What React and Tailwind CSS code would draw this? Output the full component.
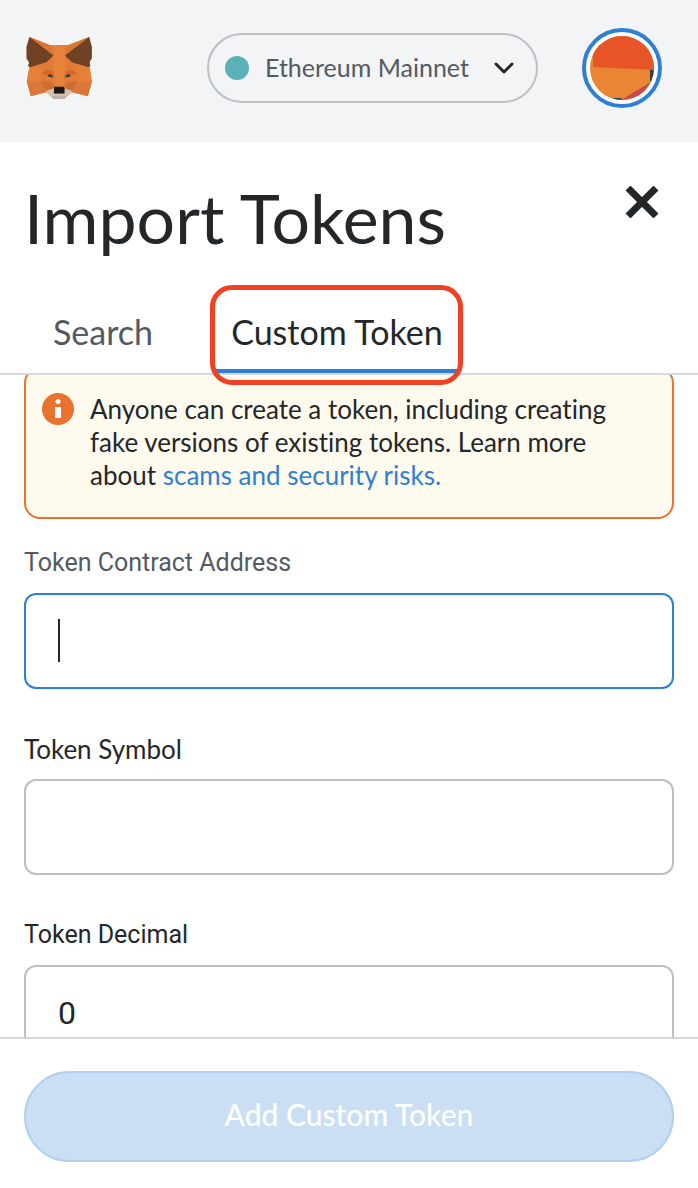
import React from 'react';

function FoxLogo() {
  return (
    <svg viewBox="0 0 195 184" className="h-[62px] w-[66px]" aria-label="Wallet logo" role="img">
      <path fill="#e17b35" d="M10 0 70 24h56L187 0l8 32-7 52 7 48-12 44-48-12-22 20H82l-22-20-46 12L2 132l8-46L1 32z" />
      <path fill="#e68239" d="M82 24h32l4 62-7 62H87L78 86z" />
      <path fill="#da7630" d="M10 0 70 24l12 31zM187 0l-61 24-11 31z" />
      <path fill="#704225" d="M10 0 81 55 60 75 14 90 5 86 9 76 1 64 1 30zM187 0l-72 55 21 20 47 15 8-4-4-10 8-12V30z" />
      <path fill="#e67f37" d="M14 90 47 80 42 132H2l8-42zM183 90l-33-10 4 52h41l-7-42z" />
      <path fill="#d97838" d="M2 132h44l14 30-46 14zM195 132h-44l-16 30 48 14z" />
      <path fill="#cb6e31" d="M46 132h24l14 14-22 18zM151 132h-24l-14 14 22 18z" />
      <path fill="#d26b2b" d="M44 108 60 96l22 6 2 18zM151 108l-15-12-21 6-2 18z" />
      <path fill="#354453" d="m64 113 13 0 3 7-14-2zM132 113h-13l-3 7 14-2z" />
      <path fill="#3a2a22" d="m68 108 10 8-10-2zM127 108l-9 8 10-2z" />
      <path fill="#d8bfae" d="m58 160 26-8v15h29v-15l24 8-24 24H82z" />
      <path fill="#bdb3ac" d="M74 174h48l-9 10H82z" />
      <path fill="#17191b" d="m83 149 3-1h24l4 3v17H82z" />
    </svg>
  );
}

function AccountAvatar() {
  return (
    <svg viewBox="0 0 64 64" className="size-16 rounded-full" aria-hidden="true">
      <rect width="64" height="64" fill="#ea8534" />
      <path fill="#e75526" d="M3 0h61v34L3 31z" />
      <path fill="#c84b4a" d="M64 44 31 64h33z" />
      <path fill="#3a3c3d" d="M60 34h4v9l-4 3zM22 62l9 0 1 2H22z" />
    </svg>
  );
}

function Field({ id, label, labelClass, inputClass, focused, ...props }) {
  return (
    <div className="flex flex-col">
      <label htmlFor={id} className={`mb-3 leading-[36px] ${labelClass}`}>
        {label}
      </label>
      <div className="relative">
        <input
          id={id}
          type="text"
          className={`block h-24 w-full rounded-xl border-2 bg-white px-8 font-[Roboto,sans-serif] text-[32px] text-[#24272a] outline-none ${inputClass}`}
          {...props}
        />
        {/* text cursor */}
        {focused && <span className="absolute left-[34px] top-[26px] h-[43px] w-0.5 bg-[#24272a]" />}
      </div>
    </div>
  );
}

export default function App() {
  return (
    <div className="flex h-screen flex-col overflow-hidden bg-white font-[Lato,sans-serif] text-[#24272a] [font-variant-ligatures:none]">
      {/* network bar */}
      <header className="flex shrink-0 items-center bg-[#f2f4f6] pb-[34px] pl-[26px] pr-9 pt-7">
        <FoxLogo />
        <button
          type="button"
          className="ml-auto mr-11 flex h-[70px] w-[331px] items-center rounded-full border-2 border-[#bbc0c5] px-4 text-[#535a61]"
        >
          <span className="size-6 rounded-full bg-[#5cb0b7]" />
          <span className="ml-4 flex-1 text-left text-[25px]">Ethereum Mainnet</span>
          <svg viewBox="0 0 20 12" className="mr-1.5 h-3 w-5" fill="none" stroke="#24272a" strokeWidth="3" strokeLinecap="round" strokeLinejoin="round">
            <path d="m2 2 8 8 8-8" />
          </svg>
        </button>
        <button type="button" aria-label="Account menu" className="flex size-20 items-center justify-center rounded-full border-4 border-[#2f7fd3] bg-white">
          <AccountAvatar />
        </button>
      </header>

      {/* title */}
      <div className="flex shrink-0 items-start justify-between pb-7 pl-6 pr-[39px] pt-9">
        <h1 className="text-[68px] leading-[80px]">Import Tokens</h1>
        <button type="button" aria-label="Close" className="mt-2">
          <svg viewBox="0 0 34 32" className="h-8 w-[34px]" stroke="#24272a" strokeWidth="7">
            <path d="m3 2 28 28M31 2 3 30" />
          </svg>
        </button>
      </div>

      {/* tabs */}
      <div role="tablist" className="flex h-[89px] shrink-0 border-b-2 border-[#d6d9dc] pl-6 text-[34px]">
        <button type="button" role="tab" aria-selected="false" className="w-[190px] pr-8 pt-1 text-center text-[#535a61]">
          Search
        </button>
        <button type="button" role="tab" aria-selected="true" className="relative w-[246px] border-b-4 border-[#2f7fd3] pt-2">
          Custom Token
          <span className="absolute -bottom-4 -left-1 -right-[3px] -top-px z-10 rounded-[22px] border-[5px] border-[#f04124]" />
        </button>
      </div>

      {/* form */}
      <main className="flex min-h-0 flex-1 flex-col overflow-hidden px-6">
        <div className="-mt-2 flex shrink-0 gap-4 rounded-2xl border-2 border-[#e8722e] bg-[#fffaee] pb-[25px] pl-4 pr-10 pt-6">
          <svg viewBox="0 0 32 32" className="size-8 shrink-0" aria-hidden="true">
            <circle cx="16" cy="16" r="16" fill="#e8722e" />
            <circle cx="16" cy="8.500" r="2.500" fill="#fff" />
            <path fill="#fff" d="M13 14h6v11h-6z" />
          </svg>
          <p className="text-[26px] leading-[33px]">
            Anyone can create a token, including creating fake versions of existing tokens. Learn more about{' '}
            <a href="#risks" className="text-[#2f7fd3]">scams and security risks.</a>
          </p>
        </div>

        <form className="mt-[26px] flex flex-col gap-[42px]">
          <Field
            id="address"
            label="Token Contract Address"
            labelClass="font-[Roboto,sans-serif] text-[25px] text-[#535a61]"
            inputClass="border-[#2f7fd3]"
            focused
          />
          <Field id="symbol" label="Token Symbol" labelClass="text-[26px]" inputClass="border-[#bbc0c5]" />
          <Field
            id="decimal"
            label="Token Decimal"
            labelClass="font-[Roboto,sans-serif] text-[25px]"
            inputClass="border-[#bbc0c5]"
            defaultValue="0"
          />
        </form>
      </main>

      {/* footer */}
      <footer className="shrink-0 border-t-2 border-[#d6d9dc] bg-white px-6 pb-[26px] pt-8">
        <button
          type="button"
          disabled
          className="h-[91px] w-full rounded-full border-2 border-[#b1d0ee] bg-[#cadff3] pb-1 text-[30px] font-medium text-white"
        >
          Add Custom Token
        </button>
      </footer>
    </div>
  );
}
